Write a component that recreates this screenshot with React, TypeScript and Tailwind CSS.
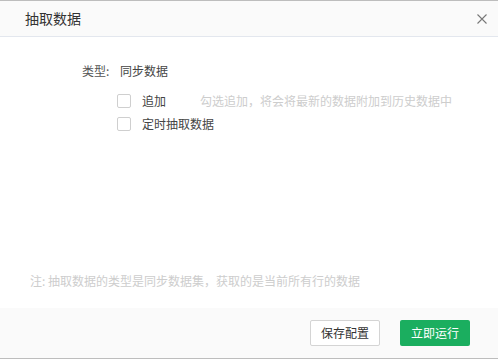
import React from 'react';

const font = { fontFamily: '"Noto Sans CJK SC", "Noto Sans", sans-serif' };

const Check = ({ label, hint }: { label: string; hint?: string }) => (
    <div className="flex items-center h-[23px] pl-[117px] whitespace-nowrap">
        <span className="w-[14px] h-[14px] border border-[#cfcfcf] rounded-[2px] bg-white shrink-0" />
        <span className="ml-[11px] text-[12px] text-[#444] min-w-[58px]">{label}</span>
        {hint && <span className="text-[12px] text-[#cdcdcd]">{hint}</span>}
    </div>
);

export default function App() {
    return (
        <div
            className="w-[498px] h-[359px] flex flex-col bg-white border-t border-b border-[#bdbdbd] overflow-hidden"
            style={font}
        >
            {/* header */}
            <div className="h-[36px] shrink-0 flex items-center justify-between pl-[25px] pr-[11px] bg-[#fafafa] border-b border-[#e3e7ee]">
                <span className="text-[14px] text-[#333]">抽取数据</span>
                <svg width="10" height="10" viewBox="0 0 10 10">
                    <path d="M0.5 0.5 L9.5 9.5 M9.5 0.5 L0.5 9.5" stroke="#777" strokeWidth="1.1" />
                </svg>
            </div>

            {/* body */}
            <div className="flex-1 flex flex-col">
                <div className="flex items-center h-[20px] mt-[24px] pl-[82px] text-[12px]">
                    <span className="w-[38px] text-[#555]">类型:</span>
                    <span className="text-[#444]">同步数据</span>
                </div>
                <div className="mt-[8px]">
                    <Check label="追加" hint="勾选追加，将会将最新的数据附加到历史数据中" />
                    <Check label="定时抽取数据" />
                </div>
                <div className="mt-auto pb-[17px] pl-[30px] h-[37px] flex items-start text-[12px] leading-[20px] text-[#cdcdcd]">
                    注: 抽取数据的类型是同步数据集，获取的是当前所有行的数据
                </div>
            </div>

            {/* footer */}
            <div className="h-[50px] shrink-0 bg-[#fafafa] flex items-center justify-end gap-[20px] pr-[28px]">
                <button className="w-[70px] h-[26px] border border-[#d4d4d4] rounded-[2px] bg-white text-[12px] text-[#333]">
                    保存配置
                </button>
                <button className="w-[70px] h-[26px] rounded-[2px] bg-[#1bae5f] text-[12px] text-white">
                    立即运行
                </button>
            </div>
        </div>
    );
}
